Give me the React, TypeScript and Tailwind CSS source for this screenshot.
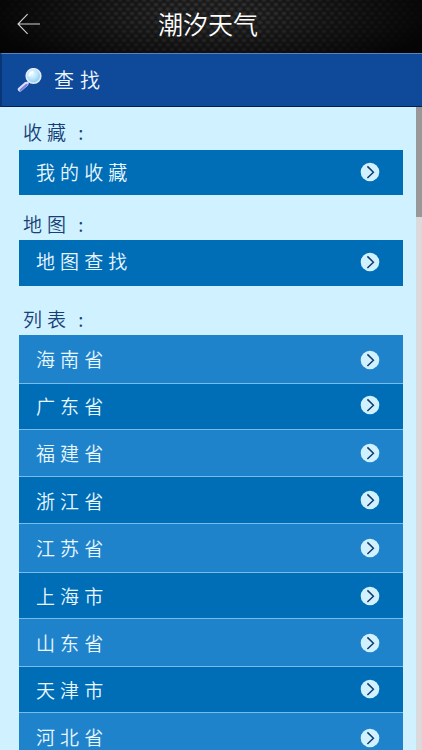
import React from 'react'
import clsx from 'clsx'

interface IProvince{
    name:string
    height:string
    textShift?:string
    iconShift?:string
}

interface RowProps{
    label:string
    className?:string
    textShift?:string
    iconShift?:string
}

const provinces:IProvince[] = [
    {name:'海南省', height:'h-[49px]', textShift:'pb-px', iconShift:'pt-px'},
    {name:'广东省', height:'h-[46px]', textShift:'pb-px', iconShift:'pb-[3px]'},
    {name:'福建省', height:'h-[47px]', textShift:'pb-px'},
    {name:'浙江省', height:'h-[47px]', textShift:'pt-px'},
    {name:'江苏省', height:'h-[49px]', textShift:'pb-px'},
    {name:'上海市', height:'h-[46px]', iconShift:'pt-px'},
    {name:'山东省', height:'h-[48px]'},
    {name:'天津市', height:'h-[46px]', textShift:'pt-px', iconShift:'pb-px'},
    {name:'河北省', height:'h-[50px]', textShift:'pb-px'},
]

const BackArrow = () => (
    <svg className="mb-[5px] ml-[17px] h-[22px] w-6" viewBox="0 0 24 22" fill="none" stroke="#d2d2d2" strokeWidth="1.1">
        <path d="M10.6 1.2 1 11l9.6 9.8M1 11h22" />
    </svg>
)

const Magnifier = () => (
    <svg className="h-6 w-[26px]" viewBox="0 0 26 24">
        <defs>
            <radialGradient id="lens" cx="0.4" cy="0.35" r="0.7">
                <stop offset="0" stopColor="#f1fcff" />
                <stop offset="0.55" stopColor="#b4e3fa" />
                <stop offset="1" stopColor="#7cc5ee" />
            </radialGradient>
        </defs>
        <path d="M11.5 14 9 16.5" stroke="#c9d3e8" strokeWidth="2.2" />
        <path d="M9.2 16 3 21.4" stroke="#dcdeff" strokeWidth="4.4" strokeLinecap="round" />
        <path d="M9.6 16.8 3.6 22" stroke="#7f83dd" strokeWidth="2.2" strokeLinecap="round" />
        <circle cx="16.5" cy="8" r="7.3" fill="url(#lens)" stroke="#e3e9f7" strokeWidth="1.6" />
        <path d="M12.3 7.5c.3-2 1.7-3.4 3.6-3.7" fill="none" stroke="#fff" strokeWidth="1.6" strokeLinecap="round" />
    </svg>
)

const CircleArrow = () => (
    <svg className="h-5 w-5" viewBox="0 0 20 20">
        <circle cx="10" cy="10" r="9.3" fill="#d0f1ff" />
        <path d="m7.4 4.4 6 5.8-6 5.8" fill="none" stroke="#143a6b" strokeWidth="1.5" />
    </svg>
)

const Row = ({label,className,textShift,iconShift}:RowProps) => (
    <li className={clsx('flex shrink-0 items-center justify-between pl-[17px] pr-[23px] text-[#e8f7ff]', className)}>
        <span className={clsx('text-[19px] leading-6 tracking-[5.1px] font-[350]', textShift)}>{label}</span>
        <span className={iconShift}><CircleArrow /></span>
    </li>
)

const SectionTitle = ({label,className}:{label:string, className:string}) => (
    <h2 className={clsx('flex h-6 shrink-0 pl-1 text-[19px] leading-6 tracking-[5.1px] font-[350] text-[#164176]', className)}>
        {label}
        <span className="ml-[7px]">:</span>
    </h2>
)

const App = () => {
    return (
        <div className="flex h-[750px] w-[422px] flex-col overflow-hidden bg-[#d0f1ff] font-['Noto_Sans_CJK_SC',sans-serif]">
            <header className="grid h-[53px] shrink-0 grid-cols-[1fr_auto_1fr] items-center bg-[#161616] [background-image:radial-gradient(ellipse_54%_120%_at_50%_25%,transparent_20%,#050505_100%),radial-gradient(ellipse_4px_3px_at_center,#363636,transparent),radial-gradient(ellipse_4px_3px_at_center,#363636,transparent)] [background-position:0_0,0_0,4px_4.5px] [background-size:100%_100%,8px_9px,8px_9px]">
                <BackArrow />
                <h1 className="pb-[7px] pr-[6px] text-[25px] font-[350] leading-8 text-white">潮汐天气</h1>
            </header>
            <div className="flex h-[54px] shrink-0 items-center border-y border-t-[#5c82bb] border-b-[#071f50] border-l-2 border-l-[#0a3577] bg-[#0f4999] pl-[15px]">
                <Magnifier />
                <span className="ml-[11px] text-[20px] font-[350] leading-6 tracking-[6px] text-[#eef6ff]">查找</span>
            </div>
            <div className="flex min-h-0 flex-1">
                <main className="flex min-w-0 flex-1 flex-col overflow-hidden pl-[19px] pr-[13px]">
                    <SectionTitle label="收藏" className="mt-[13px]" />
                    <ul className="mt-[6px]">
                        <Row label="我的收藏" className="h-[45px] bg-[#006db7]" textShift="pb-px" iconShift="pb-px" />
                    </ul>
                    <SectionTitle label="地图" className="mt-[17px]" />
                    <ul className="mt-1">
                        <Row label="地图查找" className="h-[46px] bg-[#006db7]" textShift="pb-[4px]" iconShift="pb-[3px]" />
                    </ul>
                    <SectionTitle label="列表" className="mt-[21px]" />
                    <ul className="mt-1">
                        {provinces.map((province, index) =>
                            <Row
                                key={province.name}
                                label={province.name}
                                textShift={province.textShift}
                                iconShift={province.iconShift}
                                className={clsx('border-b border-[#78bde9]', province.height, index % 2 ? 'bg-[#006db7]' : 'bg-[#1f83cb]')}
                            />
                        )}
                    </ul>
                </main>
                <div className="w-[6px] bg-[#dcd9dc]">
                    <div className="h-[110px] bg-[#999899]"></div>
                </div>
            </div>
        </div>
    )
}

export default App
